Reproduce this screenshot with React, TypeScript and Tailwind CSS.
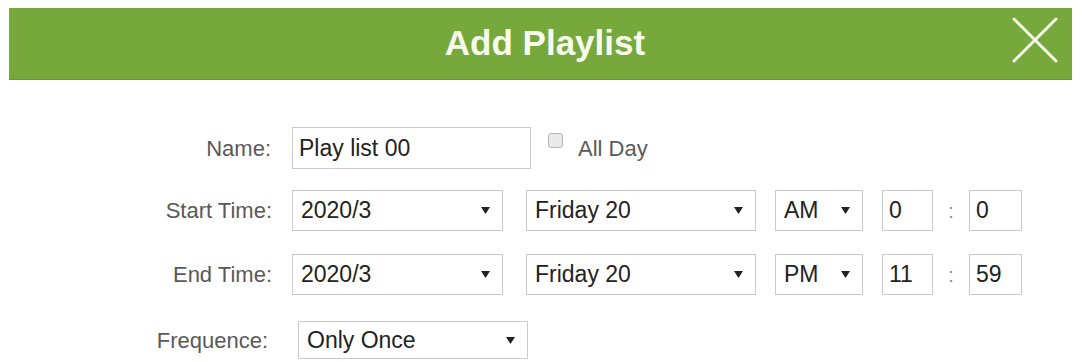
import React from "react";

function Arrow() {
  return (
    <svg width="9" height="7" viewBox="0 0 9 7" className="shrink-0">
      <path d="M0 0 H9 L4.5 7 Z" fill="#222" />
    </svg>
  );
}

function Select({ value, className }: { value: string; className: string }) {
  return (
    <div
      className={`flex items-center justify-between border border-[#cacaca] bg-white pl-[8px] pr-[12px] text-[23px] text-[#222] ${className}`}
    >
      <span>{value}</span>
      <Arrow />
    </div>
  );
}

function TextBox({ value, className }: { value: string; className: string }) {
  return (
    <div
      className={`flex items-center border border-[#cacaca] bg-white pl-[6px] text-[23px] text-[#222] ${className}`}
    >
      {value}
    </div>
  );
}

function Label({ text, className = "w-[272px]" }: { text: string; className?: string }) {
  return <div className={`text-right text-[22px] text-[#595959] ${className}`}>{text}</div>;
}

function TimeRow({ label, ampm, hour, minute, className }: { label: string; ampm: string; hour: string; minute: string; className: string }) {
  return (
    <div className={`flex items-center ${className}`}>
      <Label text={label} />
      <Select value="2020/3" className="ml-[20px] h-[41px] w-[211px]" />
      <Select value="Friday 20" className="ml-[23px] h-[41px] w-[230px]" />
      <Select value={ampm} className="ml-[19px] h-[41px] w-[88px]" />
      <TextBox value={hour} className="ml-[19px] h-[41px] w-[51px]" />
      <div className="w-[36px] text-center text-[20px] text-[#888]">:</div>
      <TextBox value={minute} className="h-[41px] w-[53px]" />
    </div>
  );
}

export default function App() {
  return (
    <div
      className="w-[1082px] h-[362px] overflow-hidden bg-white"
      style={{ fontFamily: '"Liberation Sans", Arial, sans-serif' }}
    >
      <div className="relative mx-[9px] mt-[8px] flex h-[72px] w-[1063px] items-center justify-center bg-[#77a83b] border-b border-[#6a9634]">
        <h1 className="ml-[9px] text-[35px] font-bold text-[#f6fbec]">Add Playlist</h1>
        <button className="absolute right-[14px] top-[9px] h-[46px] w-[46px]">
          <svg width="46" height="46" viewBox="0 0 46 46">
            <path d="M2 2 L44 44 M44 2 L2 44" stroke="#f6fbec" strokeWidth="3" strokeLinecap="round" />
          </svg>
        </button>
      </div>

      <div className="mt-[47px] flex items-center">
        <Label text="Name:" className="w-[271px]" />
        <TextBox value="Play list 00" className="ml-[21px] h-[42px] w-[239px]" />
        <div className="ml-[17px] mb-[16px] h-[15px] w-[15px] rounded-[3px] border border-[#b5b5b5] bg-[#e9e9e9]" />
        <span className="ml-[15px] text-[22px] text-[#5a5a5a]">All Day</span>
      </div>

      <TimeRow label="Start Time:" ampm="AM" hour="0" minute="0" className="mt-[21px]" />
      <TimeRow label="End Time:" ampm="PM" hour="11" minute="59" className="mt-[23px]" />

      <div className="mt-[26px] flex items-center">
        <Label text="Frequence:" className="w-[268px]" />
        <Select value="Only Once" className="ml-[30px] h-[38px] w-[230px]" />
      </div>
    </div>
  );
}
